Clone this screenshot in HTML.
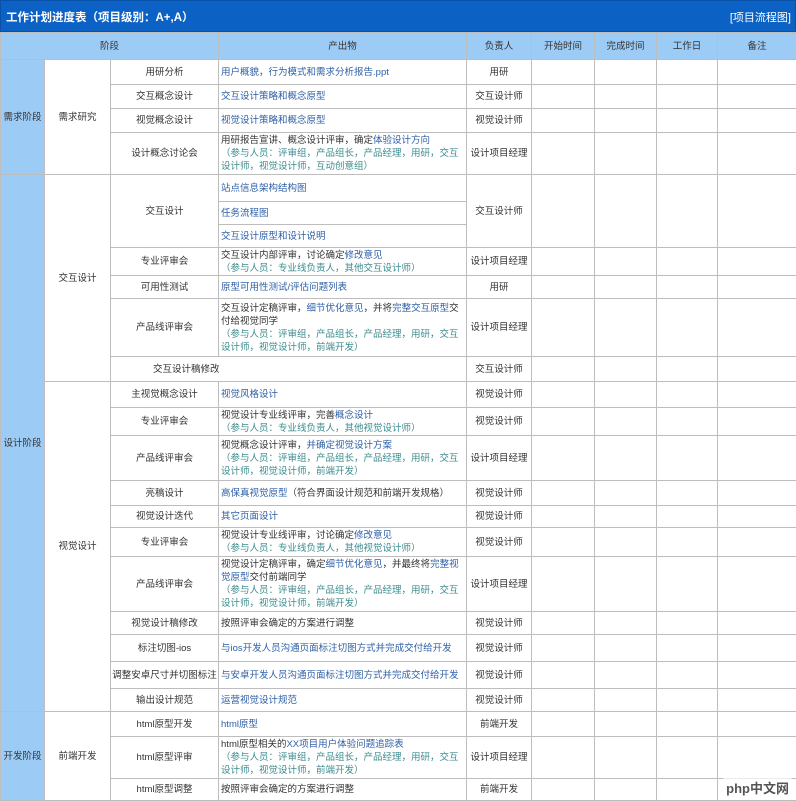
<!DOCTYPE html>
<html><head><meta charset="utf-8"><style>
html,body{margin:0;padding:0;width:796px;height:800px;overflow:hidden;background:#fff;}
body{font-family:"Liberation Sans","Noto Sans CJK SC",sans-serif;font-size:9.5px;color:#333;}
.title{position:absolute;left:0;top:0;width:796px;height:32px;background:#0b62c4;color:#fff;box-sizing:border-box;border:1px solid #0752a8;}
.title .l{position:absolute;left:5px;top:8px;font-size:11.5px;font-weight:bold;}
.title .r{position:absolute;right:4px;top:8px;font-size:11px;}
table{position:absolute;left:0;top:32px;border-collapse:collapse;table-layout:fixed;width:796px;}
td{border:1px solid #bdbdbd;padding:0 2px;text-align:center;vertical-align:middle;line-height:13px;overflow:hidden;}
tr.h td{background:#9ccbf5;color:#333;}
td.s{background:#9ccbf5;}
td.o{text-align:left;}
.b{color:#2d5fa6;}
.g{color:#3c8c8f;}
.wm{position:absolute;right:4px;bottom:2px;font-size:13px;font-weight:bold;color:#555;background:rgba(255,255,255,.7);padding:1px 3px;border-radius:3px;}
</style></head><body>
<div class="title"><span class="l">工作计划进度表（项目级别：A+,A）</span><span class="r">[项目流程图]</span></div>
<table>
<colgroup><col style="width:44px"><col style="width:66px"><col style="width:108px"><col style="width:248px"><col style="width:65px"><col style="width:63px"><col style="width:62px"><col style="width:61px"><col style="width:79px"></colgroup>
<tr class="h" style="height:27px"><td colspan="3">阶段</td><td>产出物</td><td>负责人</td><td>开始时间</td><td>完成时间</td><td>工作日</td><td>备注</td></tr>
<tr style="height:25px"><td class="s" rowspan="4">需求阶段</td><td rowspan="4">需求研究</td><td>用研分析</td><td class="o"><span class="b">用户概貌，行为模式和需求分析报告.ppt</span></td><td>用研</td><td></td><td></td><td></td><td></td></tr>
<tr style="height:24px"><td>交互概念设计</td><td class="o b">交互设计策略和概念原型</td><td>交互设计师</td><td></td><td></td><td></td><td></td></tr>
<tr style="height:24px"><td>视觉概念设计</td><td class="o b">视觉设计策略和概念原型</td><td>视觉设计师</td><td></td><td></td><td></td><td></td></tr>
<tr style="height:42px"><td>设计概念讨论会</td><td class="o">用研报告宣讲、概念设计评审，确定<span class="b">体验设计方向</span><br><span class="g">（参与人员：评审组，产品组长，产品经理，用研，交互设计师，视觉设计师，互动创意组）</span></td><td>设计项目经理</td><td></td><td></td><td></td><td></td></tr>
<tr style="height:27px"><td class="s" rowspan="18">设计阶段</td><td rowspan="7">交互设计</td><td rowspan="3">交互设计</td><td class="o b">站点信息架构结构图</td><td rowspan="3">交互设计师</td><td rowspan="3"></td><td rowspan="3"></td><td rowspan="3"></td><td rowspan="3"></td></tr>
<tr style="height:23px"><td class="o b">任务流程图</td></tr>
<tr style="height:23px"><td class="o b">交互设计原型和设计说明</td></tr>
<tr style="height:28px"><td>专业评审会</td><td class="o">交互设计内部评审，讨论确定<span class="b">修改意见</span><br><span class="g">（参与人员：专业线负责人，其他交互设计师）</span></td><td>设计项目经理</td><td></td><td></td><td></td><td></td></tr>
<tr style="height:23px"><td>可用性测试</td><td class="o b">原型可用性测试/评估问题列表</td><td>用研</td><td></td><td></td><td></td><td></td></tr>
<tr style="height:58px"><td>产品线评审会</td><td class="o">交互设计定稿评审，<span class="b">细节优化意见</span>，并将<span class="b">完整交互原型</span>交付给视觉同学<br><span class="g">（参与人员：评审组，产品组长，产品经理，用研，交互设计师，视觉设计师，前端开发）</span></td><td>设计项目经理</td><td></td><td></td><td></td><td></td></tr>
<tr style="height:25px"><td colspan="2" style="text-align:left;padding-left:42px">交互设计稿修改</td><td>交互设计师</td><td></td><td></td><td></td><td></td></tr>
<tr style="height:26px"><td rowspan="11">视觉设计</td><td>主视觉概念设计</td><td class="o b">视觉风格设计</td><td>视觉设计师</td><td></td><td></td><td></td><td></td></tr>
<tr style="height:28px"><td>专业评审会</td><td class="o">视觉设计专业线评审，完善<span class="b">概念设计</span><br><span class="g">（参与人员：专业线负责人，其他视觉设计师）</span></td><td>视觉设计师</td><td></td><td></td><td></td><td></td></tr>
<tr style="height:45px"><td>产品线评审会</td><td class="o">视觉概念设计评审，<span class="b">并确定视觉设计方案</span><br><span class="g">（参与人员：评审组，产品组长，产品经理，用研，交互设计师，视觉设计师，前端开发）</span></td><td>设计项目经理</td><td></td><td></td><td></td><td></td></tr>
<tr style="height:25px"><td>亮稿设计</td><td class="o"><span class="b">高保真视觉原型</span>（符合界面设计规范和前端开发规格）</td><td>视觉设计师</td><td></td><td></td><td></td><td></td></tr>
<tr style="height:22px"><td>视觉设计迭代</td><td class="o b">其它页面设计</td><td>视觉设计师</td><td></td><td></td><td></td><td></td></tr>
<tr style="height:29px"><td>专业评审会</td><td class="o">视觉设计专业线评审，讨论确定<span class="b">修改意见</span><br><span class="g">（参与人员：专业线负责人，其他视觉设计师）</span></td><td>视觉设计师</td><td></td><td></td><td></td><td></td></tr>
<tr style="height:55px"><td>产品线评审会</td><td class="o">视觉设计定稿评审，确定<span class="b">细节优化意见</span>，并最终将<span class="b">完整视觉原型</span>交付前端同学<br><span class="g">（参与人员：评审组，产品组长，产品经理，用研，交互设计师，视觉设计师，前端开发）</span></td><td>设计项目经理</td><td></td><td></td><td></td><td></td></tr>
<tr style="height:23px"><td>视觉设计稿修改</td><td class="o">按照评审会确定的方案进行调整</td><td>视觉设计师</td><td></td><td></td><td></td><td></td></tr>
<tr style="height:27px"><td>标注切图-ios</td><td class="o b">与ios开发人员沟通页面标注切图方式并完成交付给开发</td><td>视觉设计师</td><td></td><td></td><td></td><td></td></tr>
<tr style="height:27px"><td style="white-space:nowrap;padding:0">调整安卓尺寸并切图标注</td><td class="o b">与安卓开发人员沟通页面标注切图方式并完成交付给开发</td><td>视觉设计师</td><td></td><td></td><td></td><td></td></tr>
<tr style="height:23px"><td>输出设计规范</td><td class="o b">运营视觉设计规范</td><td>视觉设计师</td><td></td><td></td><td></td><td></td></tr>
<tr style="height:25px"><td class="s" rowspan="3">开发阶段</td><td rowspan="3">前端开发</td><td>html原型开发</td><td class="o b">html原型</td><td>前端开发</td><td></td><td></td><td></td><td></td></tr>
<tr style="height:42px"><td>html原型评审</td><td class="o">html原型相关的<span class="b">XX项目用户体验问题追踪表</span><br><span class="g">（参与人员：评审组，产品组长，产品经理，用研，交互设计师，视觉设计师，前端开发）</span></td><td>设计项目经理</td><td></td><td></td><td></td><td></td></tr>
<tr style="height:22px"><td>html原型调整</td><td class="o">按照评审会确定的方案进行调整</td><td>前端开发</td><td></td><td></td><td></td><td></td></tr>
</table>
<div class="wm">php中文网</div>
</body></html>
